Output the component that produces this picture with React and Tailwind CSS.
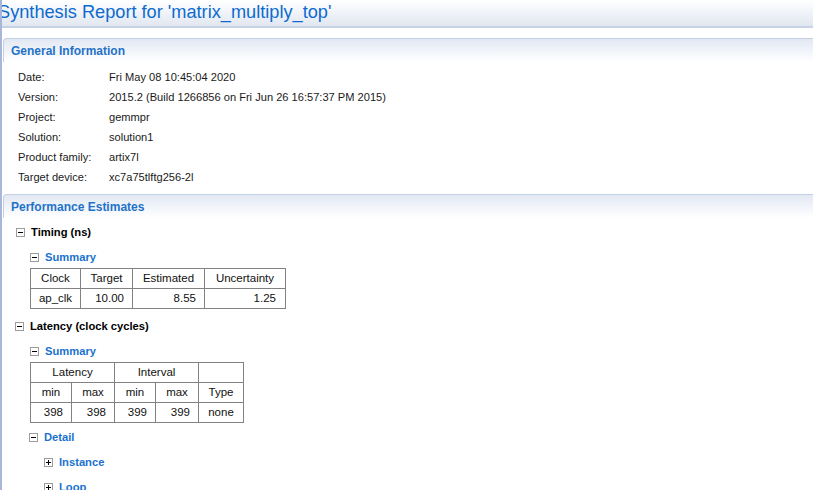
import React from "react";

const Box = ({ plus }) => (
  <svg width="9" height="9" viewBox="0 0 9 9" className="shrink-0">
    <rect x="0.5" y="0.5" width="8" height="8" fill="#fff" stroke="#9c9c9c" />
    <path d="M2 4.5h5" stroke="#000" strokeWidth="1" />
    {plus && <path d="M4.5 2v5" stroke="#000" strokeWidth="1" />}
  </svg>
);

const SectionHeader = ({ children, className = "" }) => (
  <div
    className={`h-[24px] ml-[1px] flex items-center pl-[7px] rounded-tl-[4px] border-t border-l border-[#c3cfe4] bg-gradient-to-b from-[#e2e8f3] to-white text-[12px] font-bold text-[#1f72c8] ${className}`}
  >
    {children}
  </div>
);

const TreeRow = ({ indent, plus, blue, children, className = "" }) => (
  <div
    className={`flex items-center h-[20px] gap-[6px] ${indent} ${className}`}
  >
    <Box plus={plus} />
    <span
      className={`text-[11.2px] font-bold ${blue ? "text-[#1a72cf]" : "text-black"}`}
    >
      {children}
    </span>
  </div>
);

const info = [
  ["Date:", "Fri May 08 10:45:04 2020"],
  ["Version:", "2015.2 (Build 1266856 on Fri Jun 26 16:57:37 PM 2015)"],
  ["Project:", "gemmpr"],
  ["Solution:", "solution1"],
  ["Product family:", "artix7l"],
  ["Target device:", "xc7a75tlftg256-2l"],
];

const td = "border border-[#828282] h-[20px] p-0 leading-none";

export default function App() {
  return (
    <div
      className="w-[813px] h-[490px] overflow-hidden bg-white border-l-2 border-[#a8b6da] text-[#1a1a1a]"
      style={{ fontFamily: '"Liberation Sans", Arial, sans-serif' }}
    >
      <div className="h-[28px] border-b-2 border-[#c7d2e3] bg-gradient-to-b from-white to-[#e1e7f1]">
        <div className="ml-[-4px] text-[18.2px] leading-[24px] text-[#0d6bcf] whitespace-nowrap">
          Synthesis Report for 'matrix_multiply_top'
        </div>
      </div>

      <SectionHeader className="mt-[10px]">General Information</SectionHeader>
      <div className="pt-[5px] pl-[16px] text-[11.1px]">
        {info.map(([k, v]) => (
          <div key={k} className="flex items-center h-[20px]">
            <span className="w-[91px] shrink-0">{k}</span>
            <span className="whitespace-nowrap">{v}</span>
          </div>
        ))}
      </div>

      <SectionHeader className="mt-[7px]">Performance Estimates</SectionHeader>

      <TreeRow indent="pl-[14px]" className="mt-[4px]">
        Timing (ns)
      </TreeRow>
      <TreeRow indent="pl-[28px]" blue className="mt-[5px]">
        Summary
      </TreeRow>
      <table className="ml-[28px] mt-[1px] border-collapse table-fixed w-[255px] text-[11.5px] text-[#111]">
        <colgroup>
          <col className="w-[50px]" />
          <col className="w-[52px]" />
          <col className="w-[72px]" />
          <col className="w-[81px]" />
        </colgroup>
        <tbody>
          <tr>
            <td className={`${td} text-center`}>Clock</td>
            <td className={`${td} text-center`}>Target</td>
            <td className={`${td} text-center`}>Estimated</td>
            <td className={`${td} text-center`}>Uncertainty</td>
          </tr>
          <tr>
            <td className={`${td} text-center`}>ap_clk</td>
            <td className={`${td} text-right pr-[8px]`}>10.00</td>
            <td className={`${td} text-right pr-[8px]`}>8.55</td>
            <td className={`${td} text-right pr-[9px]`}>1.25</td>
          </tr>
        </tbody>
      </table>

      <TreeRow indent="pl-[13px]" className="mt-[7px]">
        Latency (clock cycles)
      </TreeRow>
      <TreeRow indent="pl-[28px]" blue className="mt-[5px]">
        Summary
      </TreeRow>
      <table className="ml-[28px] mt-[1px] border-collapse table-fixed w-[213px] text-[11.5px] text-[#111]">
        <colgroup>
          <col className="w-[41px]" />
          <col className="w-[43px]" />
          <col className="w-[41px]" />
          <col className="w-[43px]" />
          <col className="w-[45px]" />
        </colgroup>
        <tbody>
          <tr>
            <td colSpan={2} className={`${td} text-center`}>
              Latency
            </td>
            <td colSpan={2} className={`${td} text-center`}>
              Interval
            </td>
            <td className={td}></td>
          </tr>
          <tr>
            <td className={`${td} text-center`}>min</td>
            <td className={`${td} text-center`}>max</td>
            <td className={`${td} text-center`}>min</td>
            <td className={`${td} text-center`}>max</td>
            <td className={`${td} text-center`}>Type</td>
          </tr>
          <tr>
            <td className={`${td} text-right pr-[8px]`}>398</td>
            <td className={`${td} text-right pr-[8px]`}>398</td>
            <td className={`${td} text-right pr-[8px]`}>399</td>
            <td className={`${td} text-right pr-[8px]`}>399</td>
            <td className={`${td} text-center`}>none</td>
          </tr>
        </tbody>
      </table>

      <TreeRow indent="pl-[27px]" blue className="mt-[4px]">
        Detail
      </TreeRow>
      <TreeRow indent="pl-[42px]" plus blue className="mt-[5px]">
        Instance
      </TreeRow>
      <TreeRow indent="pl-[42px]" plus blue className="mt-[5px]">
        Loop
      </TreeRow>
    </div>
  );
}
